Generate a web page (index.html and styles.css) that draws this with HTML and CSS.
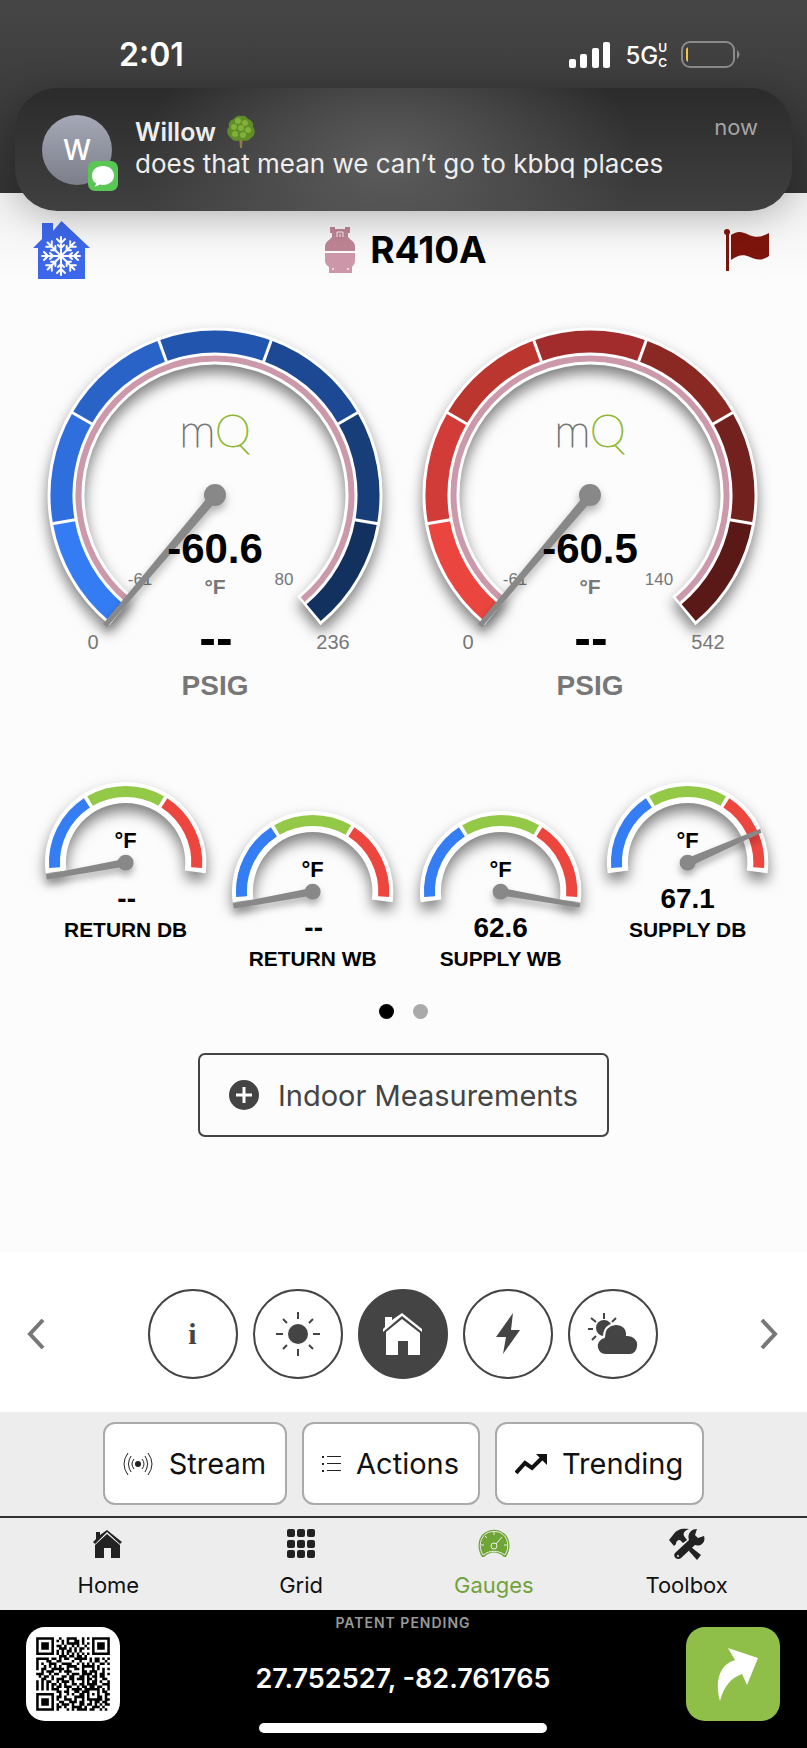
FILE: index.html
```html
<!DOCTYPE html>
<html lang="en">
<head>
<meta charset="UTF-8">
<meta name="viewport" content="width=device-width, initial-scale=1.0">
<title>Gauges</title>
<link rel="stylesheet" href="styles.css">
</head>
<body>
<div class="status-bar">
    <div class="time">2:01</div>
    <div class="status-icons">
        <svg class="signal" viewBox="0 0 42 27">
            <rect x="0" y="17" width="7" height="9" rx="2"/>
            <rect x="11" y="12" width="7" height="14" rx="2"/>
            <rect x="23" y="6" width="7" height="20" rx="2"/>
            <rect x="34" y="0" width="7" height="26" rx="2"/>
        </svg>
        <div class="network">5G<span class="network-sub"><span>U</span><span>C</span></span></div>
        <svg class="battery" viewBox="0 0 60 28">
            <rect x="1" y="1" width="52" height="25" rx="8" fill="none" stroke="#8b8b8b" stroke-width="2"/>
            <path d="M5 8 Q6 7 7 6 V21 Q5 20 5 18Z" fill="#f6c445"/>
            <path d="M56 9 Q61 13 56 18Z" fill="#8b8b8b"/>
        </svg>
    </div>
</div>

<div class="notification">
    <div class="avatar">W
        <svg class="messages" viewBox="0 0 30 30">
            <rect width="30" height="30" rx="7" fill="#5ac656"/>
            <path d="M15 5 C8.500 5 4 9 4 14.500 C4 18 5.500 20.800 8 22.200 C8 23.500 7.400 24.600 6.600 25.400 C8.700 25.300 10.300 24.500 11.500 23.500 C12.600 23.800 13.800 23.900 15 23.900 C21.500 23.900 26 20 26 14.500 C26 9 21.500 5 15 5Z" fill="#fff"/>
        </svg>
    </div>
    <div class="message">
        <div class="sender">Willow
            <svg class="tree" viewBox="0 0 30 34">
                <path d="M13 22 H17 L16 33 H14Z" fill="#8d7b4c"/>
                <path d="M15 1 C18 0 21 2 22 4 C26 5 28 9 27 12 C30 15 29 21 25 23 C22 27 18 26 15 25 C11 27 7 26 5 23 C1 20 0 15 3 12 C2 8 4 5 8 4 C9 2 12 0 15 1Z" fill="#5f8d27"/>
                <g fill="#82b03a">
                    <circle cx="12" cy="6" r="3"/><circle cx="19" cy="8" r="3"/><circle cx="8" cy="12" r="3"/>
                    <circle cx="15" cy="13" r="3"/><circle cx="22" cy="15" r="3"/><circle cx="9" cy="19" r="3"/>
                    <circle cx="17" cy="20" r="3"/>
                </g>
            </svg>
        </div>
        <div class="body-text">does that mean we can’t go to kbbq places</div>
    </div>
    <div class="when">now</div>
</div>

<main>
    <header>
        <svg class="cooling" viewBox="0 0 57 58">
            <path d="M9 2 H20 V10 L28.500 0 L57 27 H52 V58 H5 V27 H0 L9 18Z" fill="#3d67ea"/>
            <g stroke="#fff" stroke-width="2" fill="none" stroke-linecap="round">
                <g id="arms">
                    <path id="arm" d="M28 35 V16 M24 18 L28 22 L32 18 M25 24 L28 27 L31 24"/>
                    <use href="#arm" transform="rotate(45 28 35)"/>
                    <use href="#arm" transform="rotate(90 28 35)"/>
                    <use href="#arm" transform="rotate(135 28 35)"/>
                </g>
                <use href="#arms" transform="rotate(180 28 35)"/>
            </g>
        </svg>
        <div class="refrigerant">
            <svg class="tank" viewBox="0 0 30 46">
                <path d="M5 0 H10 V2 H20 V0 H25 V6 H23 V10 L26 13 C29 15 30 17 30 20 V24 H0 V20 C0 17 1 15 4 13 L7 10 V6 H5Z" fill="#bd8494"/>
                <path d="M0 26 H30 V34 C30 37 28 38 27 40 V46 H4 V40 C2 38 0 37 0 34Z" fill="#cc97a9"/>
                <path d="M12 10 V5 H18 V10 M15 7 V10" stroke="#f6eef0" fill="none"/>
                <g fill="#f6eef0"><circle cx="8" cy="42" r="1"/><circle cx="23" cy="42" r="1"/></g>
            </svg>
            <h1>R410A</h1>
        </div>
        <svg class="flag" viewBox="0 0 46 42">
            <circle cx="3" cy="3" r="3"/>
            <rect x="2" y="3" width="3" height="39"/>
            <path d="M7 6 C14 1 19 3 25 6 C32 9 38 8 45 4 V27 C38 32 32 31 26 28 C19 25 14 26 7 31Z"/>
        </svg>
    </header>

    <section class="gauges">
        <svg class="gauge" viewBox="-187 -177 375 387">
            <path class="rim" d="M-93.800 115.800 A149 149 0 1 1 93.800 115.800"/>
            <g class="segments">
                <path stroke="#347cf3" d="M-98.700 117.600 A153.500 153.500 0 0 1 -151.200 26.700"/>
                <path stroke="#2f6fdd" d="M-151.200 26.700 A153.500 153.500 0 0 1 -132.900 -76.800"/>
                <path stroke="#2963c8" d="M-132.900 -76.800 A153.500 153.500 0 0 1 -52.500 -144.200"/>
                <path stroke="#2255ae" d="M-52.500 -144.200 A153.500 153.500 0 0 1 52.500 -144.200"/>
                <path stroke="#1d4894" d="M52.500 -144.200 A153.500 153.500 0 0 1 132.900 -76.800"/>
                <path stroke="#173e79" d="M132.900 -76.800 A153.500 153.500 0 0 1 151.200 26.700"/>
                <path stroke="#12315f" d="M151.200 26.700 A153.500 153.500 0 0 1 98.700 117.600"/>
            </g>
            <path class="ticks" d="M-139.800 24.700 L-164.500 29 M-123 -71 L-144.600 -83.500 M-48.600 -133.400 L-57.100 -156.900 M48.600 -133.400 L57.100 -156.900 M123 -71 L144.600 -83.500 M139.800 24.700 L164.500 29"/>
            <path class="saturation" d="M-87.700 104.600 A136.500 136.500 0 1 1 87.700 104.600"/>
            <text class="logo" y="-48">m<tspan class="logo-q">Q</tspan></text>
            <text class="limit-small" x="-75" y="90">-61</text>
            <text class="limit-small" x="69" y="90">80</text>
            <g class="needle">
                <path d="M-3 -3 L-112 129 L-108 132 L4 3Z"/>
                <circle r="11"/>
            </g>
            <text class="temperature" y="68">-60.6</text>
            <text class="degrees" y="99">°F</text>
            <text class="limit" x="-122" y="154">0</text>
            <text class="limit" x="118" y="154">236</text>
            <text class="pressure" x="1" y="160">--</text>
            <text class="unit" y="200">PSIG</text>
        </svg>
        <svg class="gauge" viewBox="-187 -177 375 387">
            <path class="rim" d="M-93.800 115.800 A149 149 0 1 1 93.800 115.800"/>
            <g class="segments">
                <path stroke="#ea463f" d="M-98.700 117.600 A153.500 153.500 0 0 1 -151.200 26.700"/>
                <path stroke="#d23c38" d="M-151.200 26.700 A153.500 153.500 0 0 1 -132.900 -76.800"/>
                <path stroke="#bb362f" d="M-132.900 -76.800 A153.500 153.500 0 0 1 -52.500 -144.200"/>
                <path stroke="#a22c2c" d="M-52.500 -144.200 A153.500 153.500 0 0 1 52.500 -144.200"/>
                <path stroke="#8a2824" d="M52.500 -144.200 A153.500 153.500 0 0 1 132.900 -76.800"/>
                <path stroke="#72211e" d="M132.900 -76.800 A153.500 153.500 0 0 1 151.200 26.700"/>
                <path stroke="#5a1916" d="M151.200 26.700 A153.500 153.500 0 0 1 98.700 117.600"/>
            </g>
            <path class="ticks" d="M-139.800 24.700 L-164.500 29 M-123 -71 L-144.600 -83.500 M-48.600 -133.400 L-57.100 -156.900 M48.600 -133.400 L57.100 -156.900 M123 -71 L144.600 -83.500 M139.800 24.700 L164.500 29"/>
            <path class="saturation" d="M-87.700 104.600 A136.500 136.500 0 1 1 87.700 104.600"/>
            <text class="logo" y="-48">m<tspan class="logo-q">Q</tspan></text>
            <text class="limit-small" x="-75" y="90">-61</text>
            <text class="limit-small" x="69" y="90">140</text>
            <g class="needle">
                <path d="M-3 -3 L-112 129 L-108 132 L4 3Z"/>
                <circle r="11"/>
            </g>
            <text class="temperature" y="68">-60.5</text>
            <text class="degrees" y="99">°F</text>
            <text class="limit" x="-122" y="154">0</text>
            <text class="limit" x="118" y="154">542</text>
            <text class="pressure" x="1" y="160">--</text>
            <text class="unit" y="200">PSIG</text>
        </svg>
    </section>

    <section class="probes">
        <svg class="probe" viewBox="-94 -90 188 180">
            <g id="dial">
                <path class="probe-rim" d="M-69.900 9.200 A70.500 70.500 0 1 1 69.900 9.200"/>
                <g class="probe-segments">
                    <path stroke="#347df2" d="M-71.300 5 A71.500 71.500 0 0 1 -38.900 -60"/>
                    <path stroke="#93c947" d="M-35.800 -61.900 A71.500 71.500 0 0 1 35.800 -61.900"/>
                    <path stroke="#ec463f" d="M38.900 -60 A71.500 71.500 0 0 1 71.300 5"/>
                </g>
                <text class="probe-unit" y="-15">°F</text>
            </g>
            <g class="needle">
                <path d="M0 -4 L-80 12 L-79 17 L0 4Z"/>
                <circle r="8"/>
            </g>
            <text class="probe-value" x="1" y="46">--</text>
            <text class="probe-name" y="75">RETURN DB</text>
        </svg>
        <svg class="probe low" viewBox="-94 -90 188 180">
            <use href="#dial"/>
            <g class="needle">
                <path d="M0 -4 L-80 12 L-79 17 L0 4Z"/>
                <circle r="8"/>
            </g>
            <text class="probe-value" x="1" y="46">--</text>
            <text class="probe-name" y="75">RETURN WB</text>
        </svg>
        <svg class="probe low" viewBox="-94 -90 188 180">
            <use href="#dial"/>
            <g class="needle">
                <path d="M0 -4 L80 12 L79 16 L0 4Z"/>
                <circle r="8"/>
            </g>
            <text class="probe-value" y="46">62.6</text>
            <text class="probe-name" y="75">SUPPLY WB</text>
        </svg>
        <svg class="probe" viewBox="-94 -90 188 180">
            <use href="#dial"/>
            <g class="needle">
                <path d="M-2 -4 L73 -34 L74 -30 L2 4Z"/>
                <circle r="8"/>
            </g>
            <text class="probe-value" y="46">67.1</text>
            <text class="probe-name" y="75">SUPPLY DB</text>
        </svg>
    </section>

    <div class="dots">
        <span class="dot current"></span>
        <span class="dot"></span>
    </div>

    <button class="measurements">
        <svg class="plus" viewBox="0 0 30 30">
            <circle cx="15" cy="15" r="15" fill="#444"/>
            <path d="M15 7 V23 M7 15 H23" stroke="#fff" stroke-width="3"/>
        </svg>
        Indoor Measurements
    </button>
</main>

<div class="modes">
    <button class="arrow" aria-label="Previous">
        <svg viewBox="0 0 18 30"><path d="M16 1 L3 15 L16 29"/></svg>
    </button>
    <div class="circles">
        <button class="circle info">i</button>
        <button class="circle" aria-label="Outdoor">
            <svg viewBox="0 0 50 50">
                <circle cx="25" cy="25" r="10"/>
                <path d="M25 3 V10 M25 40 V47 M3 25 H10 M40 25 H47 M10 10 L14 14 M36 36 L40 40 M40 10 L36 14 M14 36 L10 40" stroke="#444" stroke-width="2"/>
            </svg>
        </button>
        <button class="circle active" aria-label="Indoor">
            <svg viewBox="0 0 50 50">
                <path d="M7 8 H14 V11 L24 4 L44 20 V23 L24 7 L5 23 V20 L7 18Z"/>
                <path d="M24 10 L42 24 V46 H30 V32 H20 V46 H8 V23Z"/>
            </svg>
        </button>
        <button class="circle" aria-label="Electrical">
            <svg viewBox="0 0 50 50"><path d="M30 4 L13 28 H23 L20 45 L37 21 H28Z"/></svg>
        </button>
        <button class="circle" aria-label="Weather">
            <svg viewBox="0 0 50 50">
                <circle cx="16" cy="19" r="8"/>
                <path d="M16 4 V10 M0 20 H5 M3 9 L8 13 M28 9 L24 13 M4 31 L8 27" stroke="#444" stroke-width="2"/>
                <path d="M18 46 C11 46 8 40 9 35 C10 31 13 29 16 28 C16 20 20 16 27 15 C34 14 40 20 39 26 C46 26 51 31 50 37 C50 42 46 46 42 46Z" stroke="#fff" stroke-width="2"/>
            </svg>
        </button>
    </div>
    <button class="arrow" aria-label="Next">
        <svg viewBox="0 0 18 30"><path d="M2 1 L15 15 L2 29"/></svg>
    </button>
</div>

<div class="toolbar">
    <button class="tool">
        <svg width="31" height="24" viewBox="0 0 31 24" fill="none" stroke="#222">
            <circle cx="15" cy="12" r="3" fill="#222" stroke="none"/>
            <path d="M11 7 Q7 12 11 17 M8 4 Q3 12 8 20 M5 1 Q-3 12 5 23 M19 7 Q23 12 19 17 M22 4 Q27 12 22 20 M25 1 Q33 12 25 23"/>
        </svg>
        Stream
    </button>
    <button class="tool">
        <svg width="19" height="18" viewBox="0 0 19 18" fill="#222">
            <path d="M0 1h2v2h-2z M0 8h2v2h-2z M0 15h2v2h-2z M5 1h14v1h-14z M5 8h14v1h-14z M5 15h14v1h-14z"/>
        </svg>
        Actions
    </button>
    <button class="tool">
        <svg width="32" height="22" viewBox="0 0 32 22">
            <path d="M1 20 L10 10 L17 15 L27 5" fill="none" stroke="#111" stroke-width="4"/>
            <path d="M21 1 H32 V12Z" fill="#111"/>
        </svg>
        Trending
    </button>
</div>

<nav>
    <a class="tab" href="#home">
        <svg viewBox="0 0 32 32">
            <path d="M4 4 H8 V7 L15 2 L30 14 L28 16 L15 4 L3 16 L1 14 L4 11Z"/>
            <path d="M15 6 L28 17 V30 H19 V20 H12 V30 H3 V17Z"/>
        </svg>
        Home
    </a>
    <a class="tab" href="#grid">
        <svg viewBox="0 0 32 32">
            <rect x="2" y="1" width="8" height="8" rx="2"/><rect x="12" y="1" width="8" height="8" rx="2"/><rect x="22" y="1" width="8" height="8" rx="2"/>
            <rect x="2" y="12" width="8" height="8" rx="2"/><rect x="12" y="12" width="8" height="8" rx="2"/><rect x="22" y="12" width="8" height="8" rx="2"/>
            <rect x="2" y="22" width="8" height="8" rx="2"/><rect x="12" y="22" width="8" height="8" rx="2"/><rect x="22" y="22" width="8" height="8" rx="2"/>
        </svg>
        Grid
    </a>
    <a class="tab selected" href="#gauges">
        <svg viewBox="0 0 32 32">
            <path d="M4 29 C-2 20 0 8 8 4 C13 1 19 1 24 4 C32 8 34 20 28 29 L26 29 C20 23 12 23 6 29Z"/>
            <g fill="none" stroke="#ededed">
                <path d="M5 27 C0 19 2 9 9 5 C13 3 19 3 23 5 C30 9 32 19 27 27 C20 22 12 22 5 27Z"/>
                <circle cx="16" cy="18" r="3"/>
                <path d="M18 16 L24 9 M16 4 V7 M7 8 L9 10 M3 17 H6 M26 17 H29"/>
            </g>
        </svg>
        Gauges
    </a>
    <a class="tab" href="#toolbox">
        <svg viewBox="0 0 36 32">
            <path d="M0 12 L4 7 C8 1 13 0 20 1 C15 3 14 5 15 8 L18 12 L14 15 L11 12 C8 12 7 14 7 16 L5 18Z"/>
            <path d="M22 19 L32 27 L28 32 L20 23Z"/>
            <path d="M35 8 C37 14 32 19 26 17 L12 30 C9 33 3 29 6 25 L20 12 C18 6 22 1 28 1 L26 7 L29 10Z"/>
            <circle cx="9" cy="28" r="1" fill="#ededed"/>
        </svg>
        Toolbox
    </a>
</nav>

<footer>
    <svg class="qr" viewBox="0 0 37 37"><path id="qr"/></svg>
    <div class="location">
        <div class="patent">PATENT PENDING</div>
        <div class="coordinates">27.752527, -82.761765</div>
        <div class="home-bar"></div>
    </div>
    <button class="share" aria-label="Share">
        <svg viewBox="0 0 94 94"><path d="M42 21 L72 31 L61 58 L56 47 C45 51 38 59 34 74 C28 52 35 37 49 33Z"/></svg>
    </button>
</footer>

<script>
    const rows = [
        '#######..#..####..#.#.#######',
        '#.....#.#.#.#..##.#...#.....#',
        '#.###.#...#.#####.#.#.#.###.#',
        '#.###.#.##.#..#.#..#..#.###.#',
        '#.###.#..###.#.#.##.#.#.###.#',
        '#.....#.#.#.##.#.#....#.....#',
        '#######.#.#.#.#.#.#.#.#######',
        '.........###.##.##.#.........',
        '#####.##.#.##..#####.#.##.#.#',
        '#...##..##....#..#...#.##..#.',
        '#.#..###..####..#.#.#.#..##.#',
        '#..#.#.#.#..####..#####.#....',
        '#.##..#####.#..##.#...#.#.#.#',
        '..#.###..#.###....##.###..#..',
        '###..#.##...#.###.####.#.##.#',
        '.#.##.#...##.##..##.#.##.##..',
        '..##..#.###..##.###.##.#..##.',
        '#.#.##..#.###.#...#.#.##.#..#',
        '#.#.#.##.#.#..##.##.####..###',
        '#.#.#.#.##.###..#.##.##.##..#',
        '#.#.#.###...#.####.######.#.#',
        '........##.##..##.###...#.##.',
        '#######..#..#.#..##.#.#.#..##',
        '#.....#.##.#...####.#...##.#.',
        '#.###.#.#..###.#..#.######.##',
        '#.###.#..##..###.##..#.##.##.',
        '#.###.#.#.###.#..##.##.#.#.##',
        '#.....#.##.#..####.#..###.#..',
        '#######.#...#.#.####.##..#.#.'
    ];
    let d = '';
    rows.forEach((row, y) => {
        [...row].forEach((cell, x) => {
            if (cell === '#') d += `M${x + 4} ${y + 4}h1v1h-1z`;
        });
    });
    document.getElementById('qr').setAttribute('d', d);
</script>
</body>
</html>
```

FILE: styles.css
```css
* {
    box-sizing: border-box;
}
body {
    margin: 0;
    font-family: Inter, 'Liberation Sans', sans-serif;
    background-color: #fcfcfc;
    color: #111;
}
button {
    font-family: inherit;
    padding: 0;
    cursor: pointer;
}
.status-bar {
    display: flex;
    justify-content: space-between;
    height: 193px;
    padding: 34px 66px 0 119px;
    background: linear-gradient(#464646, #3c3c3c 50%, #333);
    color: #fff;
}
.time {
    font-size: 32px;
    line-height: 42px;
    font-weight: 600;
}
.status-icons {
    display: flex;
    align-items: center;
    height: 42px;
    gap: 14px;
}
.signal {
    width: 42px;
    height: 27px;
    fill: #fff;
}
.network {
    display: flex;
    align-items: center;
    font-size: 24px;
    font-weight: 500;
}
.network-sub {
    display: flex;
    flex-direction: column;
    font-size: 12px;
    line-height: 15px;
    font-weight: 600;
}
.battery {
    width: 60px;
    height: 28px;
}
.notification {
    position: absolute;
    top: 88px;
    left: 15px;
    right: 15px;
    display: flex;
    height: 123px;
    padding: 27px 34px 0 27px;
    border-radius: 42px;
    background: radial-gradient(ellipse 32% 130% at 48% 60%, #5c5c5c, rgba(70, 70, 70, 0)), linear-gradient(#2b2b2b, #404040);
    box-shadow: 0 6px 36px rgba(0, 0, 0, 0.25);
    color: #eee;
}
.avatar {
    position: relative;
    width: 70px;
    height: 70px;
    margin-right: 23px;
    border-radius: 50%;
    background: linear-gradient(#a5a8b6, #7c7e8a);
    color: #fff;
    font-size: 28px;
    line-height: 70px;
    font-weight: 500;
    text-align: center;
}
.messages {
    position: absolute;
    left: 46px;
    top: 46px;
    width: 30px;
    height: 30px;
}
.message {
    flex: 1;
}
.sender {
    display: flex;
    align-items: center;
    gap: 10px;
    font-size: 25px;
    line-height: 32px;
    font-weight: 600;
}
.tree {
    width: 30px;
    height: 34px;
}
.body-text {
    font-size: 26px;
    line-height: 30px;
    white-space: nowrap;
}
.when {
    font-size: 22px;
    line-height: 24px;
    color: #a5a5a5;
}
header {
    display: grid;
    grid-template-columns: 1fr auto 1fr;
    align-items: center;
    padding: 28px 37px 0 33px;
    background: linear-gradient(#f0f0f0, #fcfcfc);
}
.cooling {
    width: 57px;
    height: 58px;
}
.refrigerant {
    display: flex;
    align-items: center;
    gap: 15px;
    padding-left: 9px;
}
.tank {
    width: 30px;
    height: 46px;
}
h1 {
    margin: 0;
    font-size: 37px;
    line-height: 46px;
    font-weight: 700;
    color: #000;
}
.flag {
    width: 46px;
    height: 42px;
    justify-self: end;
    fill: #7d150c;
}
.gauges {
    display: grid;
    grid-template-columns: 1fr 1fr;
    padding: 39px 29px 0 28px;
}
.gauge, .probe {
    display: block;
    width: 100%;
    overflow: visible;
    font-family: 'Liberation Sans', sans-serif;
    font-weight: 700;
    text-anchor: middle;
}
.rim, .probe-rim {
    fill: none;
    stroke: #fff;
    stroke-width: 37px;
    filter: drop-shadow(0 8px 7px rgba(0, 0, 0, 0.5));
}
.segments, .probe-segments {
    fill: none;
    stroke-width: 22px;
}
.ticks {
    stroke: #fff;
    stroke-width: 3px;
}
.saturation {
    fill: none;
    stroke: #cc99aa;
    stroke-width: 6px;
}
.needle {
    fill: #888;
    filter: drop-shadow(0 5px 4px rgba(0, 0, 0, 0.3));
}
.logo {
    font-family: Lato, sans-serif;
    font-weight: 100;
    font-size: 46px;
    fill: #777;
    stroke: #777;
    stroke-width: 1px;
}
.logo-q {
    fill: #8fb935;
    stroke: #8fb935;
}
.limit, .limit-small {
    font-weight: 400;
    font-size: 20px;
    fill: #777;
}
.limit-small {
    font-size: 17px;
}
.temperature {
    font-size: 42px;
}
.degrees {
    font-size: 21px;
    fill: #777;
}
.pressure {
    font-size: 50px;
}
.unit {
    font-size: 28px;
    fill: #777;
}
.probes {
    display: grid;
    grid-template-columns: repeat(4, 1fr);
    padding: 68px 26px 0 32px;
}
.low {
    margin-top: 29px;
}
.probe-rim {
    stroke-width: 21px;
}
.probe-segments {
    stroke-width: 11px;
}
.probe-unit {
    font-size: 22px;
}
.probe-value {
    font-size: 28px;
}
.probe-name {
    font-size: 21px;
}
.dots {
    display: flex;
    justify-content: center;
    gap: 19px;
    margin-top: 23px;
}
.dot {
    width: 15px;
    height: 15px;
    border-radius: 50%;
    background-color: #aaa;
}
.dot.current {
    background-color: #000;
}
.measurements {
    display: flex;
    align-items: center;
    gap: 19px;
    height: 84px;
    margin: 34px auto 115px;
    padding: 0 29px;
    border: 2px solid #444;
    border-radius: 7px;
    background: none;
    color: #444;
    font-size: 29px;
}
.plus {
    width: 30px;
    height: 30px;
}
.modes {
    display: flex;
    justify-content: space-between;
    align-items: center;
    height: 160px;
    padding: 4px 29px 0 27px;
    background-color: #fff;
}
.arrow {
    border: none;
    background: none;
}
.arrow svg {
    display: block;
    width: 18px;
    height: 30px;
    fill: none;
    stroke: #777;
    stroke-width: 4px;
}
.circles {
    display: flex;
    gap: 15px;
}
.circle {
    display: flex;
    align-items: center;
    justify-content: center;
    width: 90px;
    height: 90px;
    border: 2px solid #444;
    border-radius: 50%;
    background-color: #fff;
    color: #444;
    fill: #444;
}
.circle svg {
    width: 50px;
    height: 50px;
}
.circle.active {
    background-color: #444;
    fill: #fff;
}
.circle.info {
    font-family: 'Liberation Serif', serif;
    font-size: 30px;
    font-weight: 700;
}
.toolbar {
    display: flex;
    justify-content: center;
    gap: 15px;
    padding: 10px 0 11px;
    background-color: #ededed;
}
.tool {
    display: flex;
    align-items: center;
    gap: 15px;
    height: 83px;
    padding: 0 19px 0 18px;
    border: 2px solid #aaa;
    border-radius: 12px;
    background-color: #fff;
    color: #111;
    font-size: 29px;
}
nav {
    display: grid;
    grid-template-columns: repeat(4, 1fr);
    height: 94px;
    padding: 10px 24px 0 12px;
    border-top: 2px solid #333;
    background-color: #ededed;
}
.tab {
    display: flex;
    flex-direction: column;
    align-items: center;
    gap: 10px;
    color: #111;
    fill: #222;
    font-size: 22px;
    line-height: 30px;
    text-decoration: none;
}
.tab svg {
    width: 36px;
    height: 32px;
}
.tab.selected {
    color: #72a23c;
    fill: #6fa535;
}
footer {
    display: flex;
    justify-content: space-between;
    height: 138px;
    padding: 0 27px 0 26px;
    background-color: #000;
    color: #fff;
}
.qr, .share {
    width: 94px;
    height: 94px;
    margin-top: 17px;
    border-radius: 19px;
    background-color: #fff;
}
.location {
    display: flex;
    flex-direction: column;
    align-items: center;
}
.patent {
    margin-top: 3px;
    font-size: 14px;
    line-height: 20px;
    font-weight: 600;
    letter-spacing: 1px;
    color: #999;
}
.coordinates {
    margin: 30px 0 28px;
    font-size: 27px;
    line-height: 32px;
    font-weight: 600;
}
.home-bar {
    width: 288px;
    height: 10px;
    border-radius: 5px;
    background-color: #fff;
}
.share {
    border: none;
    background-color: #8fbe49;
    fill: #fff;
}
.share svg {
    display: block;
}
```
